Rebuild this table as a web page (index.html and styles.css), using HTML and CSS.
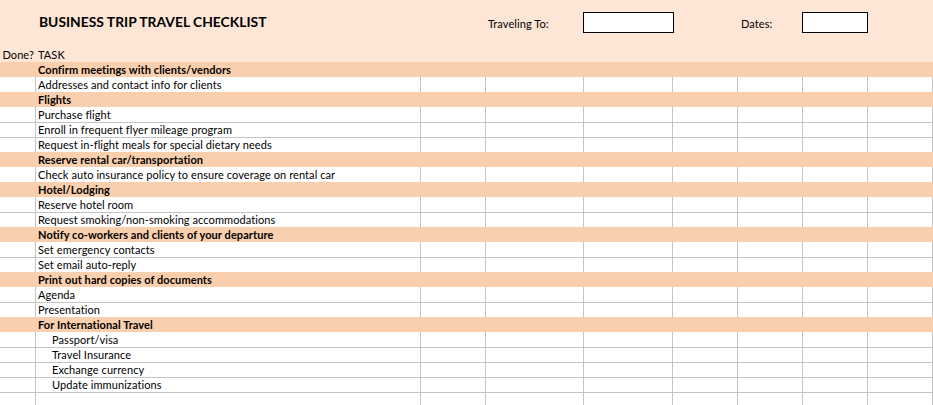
FILE: index.html
```html
<!DOCTYPE html>
<html lang="en">
<head>
<meta charset="utf-8">
<title>Business Trip Travel Checklist</title>
<link rel="stylesheet" href="styles.css">
</head>
<body>
<main class="sheet">
  <header class="top">
    <h1 class="title">BUSINESS TRIP TRAVEL CHECKLIST</h1>
    <span class="label label-to">Traveling To:</span>
    <span class="field field-to"></span>
    <span class="label label-dates">Dates:</span>
    <span class="field field-dates"></span>
  </header>
  <div class="row colhead">
    <div class="done-h">Done?</div>
    <div class="task-h">TASK</div>
  </div>

  <div class="row section">Confirm meetings with clients/vendors</div>
  <div class="row item"><div class="c"></div><div class="c task">Addresses and contact info for clients</div><div class="c"></div><div class="c"></div><div class="c"></div><div class="c"></div><div class="c"></div><div class="c"></div><div class="c"></div></div>

  <div class="row section">Flights</div>
  <div class="row item"><div class="c"></div><div class="c task">Purchase flight</div><div class="c"></div><div class="c"></div><div class="c"></div><div class="c"></div><div class="c"></div><div class="c"></div><div class="c"></div></div>
  <div class="row item"><div class="c"></div><div class="c task">Enroll in frequent flyer mileage program</div><div class="c"></div><div class="c"></div><div class="c"></div><div class="c"></div><div class="c"></div><div class="c"></div><div class="c"></div></div>
  <div class="row item"><div class="c"></div><div class="c task">Request in-flight meals for special dietary needs</div><div class="c"></div><div class="c"></div><div class="c"></div><div class="c"></div><div class="c"></div><div class="c"></div><div class="c"></div></div>

  <div class="row section">Reserve rental car/transportation</div>
  <div class="row item"><div class="c"></div><div class="c task">Check auto insurance policy to ensure coverage on rental car</div><div class="c"></div><div class="c"></div><div class="c"></div><div class="c"></div><div class="c"></div><div class="c"></div><div class="c"></div></div>

  <div class="row section">Hotel/Lodging</div>
  <div class="row item"><div class="c"></div><div class="c task">Reserve hotel room</div><div class="c"></div><div class="c"></div><div class="c"></div><div class="c"></div><div class="c"></div><div class="c"></div><div class="c"></div></div>
  <div class="row item"><div class="c"></div><div class="c task">Request smoking/non-smoking accommodations</div><div class="c"></div><div class="c"></div><div class="c"></div><div class="c"></div><div class="c"></div><div class="c"></div><div class="c"></div></div>

  <div class="row section">Notify co-workers and clients of your departure</div>
  <div class="row item"><div class="c"></div><div class="c task">Set emergency contacts</div><div class="c"></div><div class="c"></div><div class="c"></div><div class="c"></div><div class="c"></div><div class="c"></div><div class="c"></div></div>
  <div class="row item"><div class="c"></div><div class="c task">Set email auto-reply</div><div class="c"></div><div class="c"></div><div class="c"></div><div class="c"></div><div class="c"></div><div class="c"></div><div class="c"></div></div>

  <div class="row section">Print out hard copies of documents</div>
  <div class="row item"><div class="c"></div><div class="c task">Agenda</div><div class="c"></div><div class="c"></div><div class="c"></div><div class="c"></div><div class="c"></div><div class="c"></div><div class="c"></div></div>
  <div class="row item"><div class="c"></div><div class="c task">Presentation</div><div class="c"></div><div class="c"></div><div class="c"></div><div class="c"></div><div class="c"></div><div class="c"></div><div class="c"></div></div>

  <div class="row section">For International Travel</div>
  <div class="row item"><div class="c"></div><div class="c task sub">Passport/visa</div><div class="c"></div><div class="c"></div><div class="c"></div><div class="c"></div><div class="c"></div><div class="c"></div><div class="c"></div></div>
  <div class="row item"><div class="c"></div><div class="c task sub">Travel Insurance</div><div class="c"></div><div class="c"></div><div class="c"></div><div class="c"></div><div class="c"></div><div class="c"></div><div class="c"></div></div>
  <div class="row item"><div class="c"></div><div class="c task sub">Exchange currency</div><div class="c"></div><div class="c"></div><div class="c"></div><div class="c"></div><div class="c"></div><div class="c"></div><div class="c"></div></div>
  <div class="row item"><div class="c"></div><div class="c task sub">Update immunizations</div><div class="c"></div><div class="c"></div><div class="c"></div><div class="c"></div><div class="c"></div><div class="c"></div><div class="c"></div></div>
  <div class="row item"><div class="c"></div><div class="c task"></div><div class="c"></div><div class="c"></div><div class="c"></div><div class="c"></div><div class="c"></div><div class="c"></div><div class="c"></div></div>
</main>
</body>
</html>
```

FILE: styles.css
```css
* {
  box-sizing: border-box;
}

html, body {
  margin: 0;
  padding: 0;
  background: #ffffff;
  overflow: hidden;
}

body {
  font-family: Lato, "Liberation Sans", sans-serif;
  font-size: 11px;
  letter-spacing: 0.08px;
  color: #000000;
}

.sheet {
  width: 933px;
}

.top,
.row {
  display: grid;
  grid-template-columns: 36px 385px 65px 98px 89px 65px 65px 65px 65px;
}

.top {
  height: 47px;
  background: #fde6d5;
  align-items: start;
}

.title {
  grid-column: 2 / 4;
  margin: 12px 0 0 0;
  padding-left: 3px;
  font-size: 13.85px;
  line-height: 20px;
  font-weight: 700;
  letter-spacing: 0;
  white-space: nowrap;
}

.label {
  margin-top: 16px;
  line-height: 15px;
  white-space: nowrap;
}

.label-to {
  grid-column: 4;
  padding-left: 2px;
}

.label-dates {
  grid-column: 7;
  padding-left: 3px;
}

.field {
  display: block;
  margin-top: 12px;
  margin-left: -1px;
  height: 21px;
  background: #ffffff;
  border: 1px solid #000000;
}

.field-to {
  grid-column: 5;
  width: 91px;
}

.field-dates {
  grid-column: 8;
  width: 66px;
}

.row {
  height: 15px;
  line-height: 15px;
}

.colhead {
  background: #fde6d5;
}

.done-h {
  text-align: right;
  padding-right: 2px;
}

.task-h {
  padding-left: 2px;
}

.section {
  display: block;
  background: #f9cfad;
  font-weight: 700;
  padding-left: 38px;
  white-space: nowrap;
}

.item .c {
  border-right: 1px solid #c4c4c4;
  height: 15px;
}

.item + .item .c {
  border-top: 1px solid #c4c4c4;
  line-height: 14px;
}

.task {
  padding-left: 2px;
  white-space: nowrap;
  overflow: visible;
}

.task.sub {
  padding-left: 16px;
}
```
